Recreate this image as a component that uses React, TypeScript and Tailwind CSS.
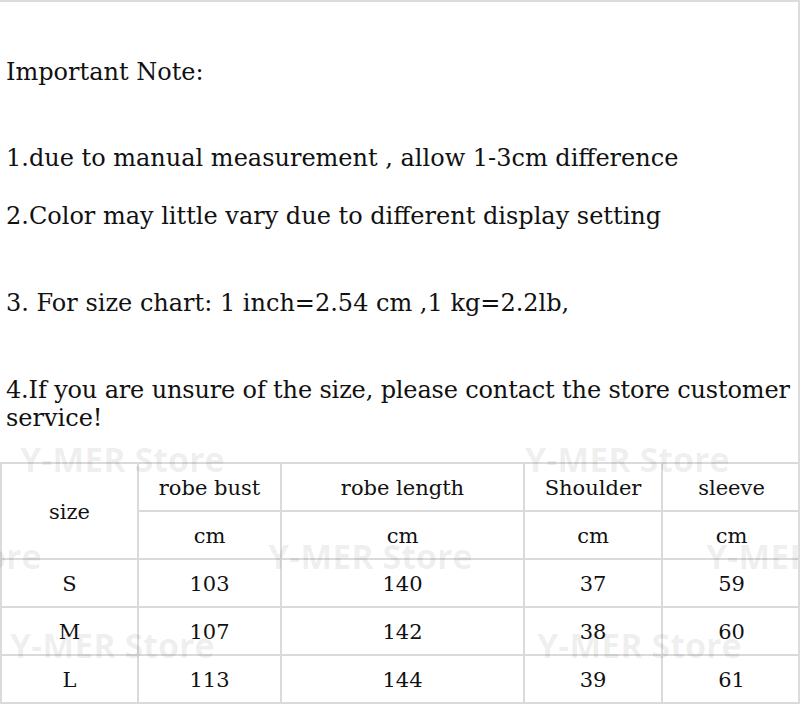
import React from "react";

const rows = [
  ["S", "103", "140", "37", "59"],
  ["M", "107", "142", "38", "60"],
  ["L", "113", "144", "39", "61"],
];

const Mark = ({ className }: { className: string }) => (
  <span
    className={`pointer-events-none absolute whitespace-nowrap text-[34px] font-bold leading-none text-black/[0.08] ${className}`}
    style={{ fontFamily: '"Open Sans", "Noto Sans", sans-serif' }}
  >
    Y-MER Store
  </span>
);

export default function App() {
  const cell = "border-2 border-[#dadada] pt-[3px] text-center align-middle";
  return (
    <div
      className="relative h-[704px] w-[800px] overflow-hidden border-t-2 border-r-2 border-[#dcdcdc] bg-white text-[#111]"
      style={{ fontFamily: '"DejaVu Serif", "Liberation Serif", serif' }}
    >
      <div className="pl-[6px] pt-[56px] text-[24px] leading-[28px]">
        <p>Important Note:</p>
        <p className="mt-[58px]">1.due to manual measurement , allow 1-3cm difference</p>
        <p className="mt-[30px]">2.Color may little vary due to different display setting</p>
        <p className="mt-[59px]">3. For size chart: 1 inch=2.54 cm ,1 kg=2.2lb,</p>
        <p className="mt-[59px]">
          <span className="whitespace-nowrap tracking-[-0.15px]">
            4.If you are unsure of the size, please contact the store customer
          </span>
          <br />
          service!
        </p>
      </div>

      <table className="mt-[30px] w-[800px] table-fixed border-collapse text-[21px]">
        <colgroup>
          <col className="w-[137px]" />
          <col className="w-[143px]" />
          <col className="w-[243px]" />
          <col className="w-[138px]" />
          <col className="w-[139px]" />
        </colgroup>
        <tbody>
          <tr className="h-[48px]">
            <td rowSpan={2} className={cell}>size</td>
            <td className={cell}>robe bust</td>
            <td className={cell}>robe length</td>
            <td className={cell}>Shoulder</td>
            <td className={cell}>sleeve</td>
          </tr>
          <tr className="h-[48px]">
            <td className={cell}>cm</td>
            <td className={cell}>cm</td>
            <td className={cell}>cm</td>
            <td className={cell}>cm</td>
          </tr>
          {rows.map((r) => (
            <tr key={r[0]} className="h-[48px]">
              {r.map((v, i) => (
                <td key={i} className={cell}>{v}</td>
              ))}
            </tr>
          ))}
        </tbody>
      </table>

      <Mark className="left-[20px] top-[440px]" />
      <Mark className="left-[525px] top-[440px]" />
      <Mark className="left-[-163px] top-[537px]" />
      <Mark className="left-[268px] top-[537px]" />
      <Mark className="left-[706px] top-[537px]" />
      <Mark className="left-[10px] top-[626px]" />
      <Mark className="left-[537px] top-[626px]" />
    </div>
  );
}
